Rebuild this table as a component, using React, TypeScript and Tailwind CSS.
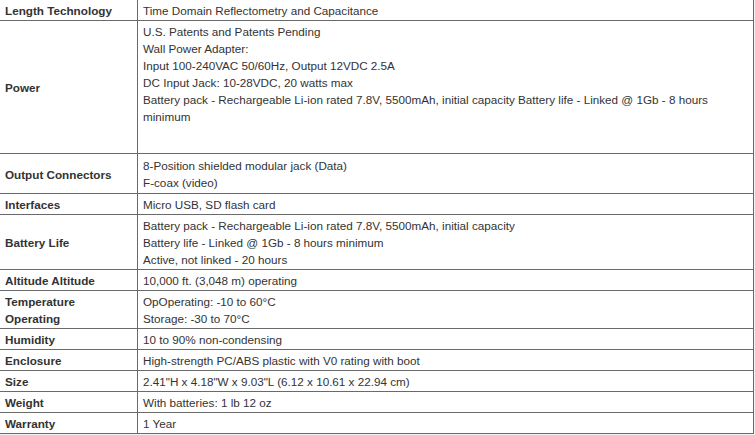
type Spec = {
  label: string[];
  lines: string[];
  h: string;
  top?: boolean;
};

const specs: Spec[] = [
  { label: ["Length Technology"], lines: ["Time Domain Reflectometry and Capacitance"], h: "h-[21px]" },
  {
    label: ["Power"],
    lines: [
      "U.S. Patents and Patents Pending",
      "Wall Power Adapter:",
      "Input 100-240VAC 50/60Hz, Output 12VDC 2.5A",
      "DC Input Jack: 10-28VDC, 20 watts max",
      "Battery pack - Rechargeable Li-ion rated 7.8V, 5500mAh, initial capacity Battery life - Linked @ 1Gb - 8 hours",
      "minimum",
    ],
    h: "h-[133px]",
    top: true,
  },
  { label: ["Output Connectors"], lines: ["8-Position shielded modular jack (Data)", "F-coax (video)"], h: "h-[40px]" },
  { label: ["Interfaces"], lines: ["Micro USB, SD flash card"], h: "h-[21px]" },
  {
    label: ["Battery Life"],
    lines: [
      "Battery pack - Rechargeable Li-ion rated 7.8V, 5500mAh, initial capacity",
      "Battery life - Linked @ 1Gb - 8 hours minimum",
      "Active, not linked - 20 hours",
    ],
    h: "h-[55px]",
  },
  { label: ["Altitude Altitude"], lines: ["10,000 ft. (3,048 m) operating"], h: "h-[21px]" },
  { label: ["Temperature", "Operating"], lines: ["OpOperating: -10 to 60°C", "Storage: -30 to 70°C"], h: "h-[38px]" },
  { label: ["Humidity"], lines: ["10 to 90% non-condensing"], h: "h-[21px]" },
  { label: ["Enclosure"], lines: ["High-strength PC/ABS plastic with V0 rating with boot"], h: "h-[21px]" },
  { label: ["Size"], lines: ["2.41\"H x 4.18\"W x 9.03\"L (6.12 x 10.61 x 22.94 cm)"], h: "h-[21px]" },
  { label: ["Weight"], lines: ["With batteries: 1 lb 12 oz"], h: "h-[21px]" },
  { label: ["Warranty"], lines: ["1 Year"], h: "h-[21px]" },
];

export default function App() {
  return (
    <div className="w-[755px] h-[435px] bg-[#f3f3f3] overflow-hidden">
      <div
        className="w-[754px] bg-white border-r border-[#6a6a6a] text-[11.7px] leading-[17px] text-[#333]"
        style={{ fontFamily: '"Liberation Sans", Arial, sans-serif' }}
      >
        {specs.map((s) => (
          <div key={s.label.join(" ")} className={`flex border-b border-[#6a6a6a] ${s.h}`}>
            <div className="w-[138px] shrink-0 border-r border-[#6a6a6a] pl-[5px] flex flex-col justify-center font-bold pt-[1px]">
              {s.label.map((l) => (
                <div key={l}>{l}</div>
              ))}
            </div>
            <div className={`flex-1 pl-[5px] flex flex-col ${s.top ? "justify-start pt-[2px]" : "justify-center pt-[1px]"}`}>
              {s.lines.map((l) => (
                <div key={l} className="whitespace-nowrap">{l}</div>
              ))}
            </div>
          </div>
        ))}
      </div>
    </div>
  );
}
